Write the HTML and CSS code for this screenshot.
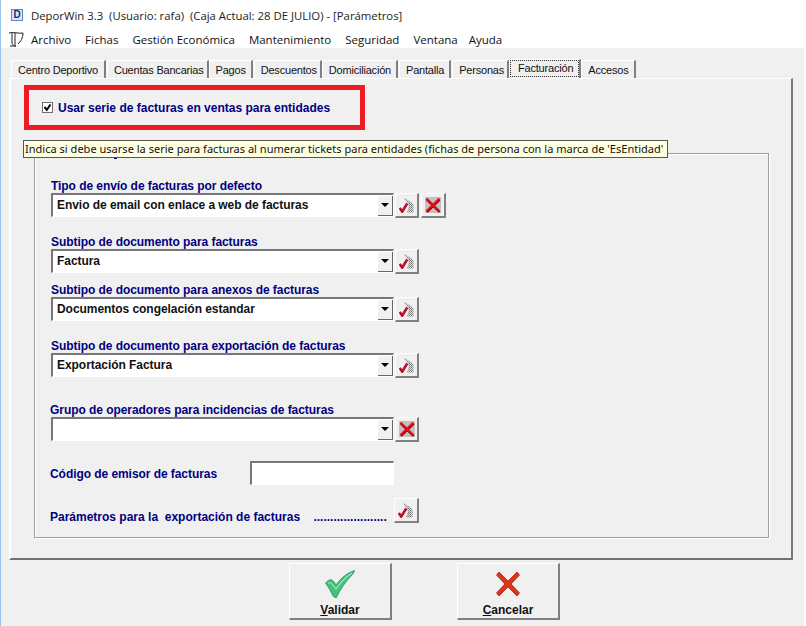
FILE: index.html
```html
<!DOCTYPE html>
<html lang="es">
<head>
<meta charset="utf-8">
<title>DeporWin</title>
<link rel="stylesheet" href="styles.css">
</head>
<body>
<svg class="defs" width="0" height="0" aria-hidden="true">
  <defs>
    <pattern id="hatch" width="2" height="2" patternUnits="userSpaceOnUse">
      <rect width="2" height="2" fill="#e0e0e0"/>
      <rect width="1" height="1" fill="#707070"/>
      <rect x="1" y="1" width="1" height="1" fill="#909090"/>
    </pattern>
    <symbol id="doc" viewBox="0 0 16 16">
      <path d="M5 .5 L14.5 7 V15.5 H8 L10 9 Z" fill="url(#hatch)"/>
      <path d="M.8 11 L3.2 14.6 L8.2 6.5" fill="none" stroke="#b8102a" stroke-width="2.6"/>
    </symbol>
    <symbol id="redx" viewBox="0 0 16 16">
      <rect width="16" height="16" fill="#c4c0c0"/>
      <path d="M2 2.6 L14.6 15 M14.6 2.6 L2 15" stroke="#700008" stroke-width="2.4"/>
      <path d="M1.4 1.6 L14.4 14.2 M14.4 1.6 L1.4 14.2" stroke="#e80c1c" stroke-width="2.2"/>
    </symbol>
  </defs>
</svg>
<div class="window">
  <header class="titlebar">
    <span class="appicon">D</span>
    <span class="titletext">DeporWin 3.3 &nbsp;(Usuario: rafa) &nbsp;(Caja Actual: 28 DE JULIO) - [Parámetros]</span>
  </header>
  <nav class="menubar">
    <svg class="menuicon" viewBox="0 0 16 16"><path d="M1 2 C5 .5 11 3 15 2 C15 7 13 10 10 13 M4 2 V12 C4 14 6 15 8 15 H2 M7 2 V14" fill="none" stroke="#222" stroke-width="1"/></svg>
    <span>Archivo</span><span>Fichas</span><span>Gestión Económica</span><span>Mantenimiento</span><span>Seguridad</span><span class="narrow">Ventana</span><span>Ayuda</span>
  </nav>
  <main class="client">
    <div class="tabs">
      <span class="tab first">Centro Deportivo</span>
      <span class="tab tight">Cuentas Bancarias</span>
      <span class="tab">Pagos</span>
      <span class="tab tight">Descuentos</span>
      <span class="tab">Domiciliación</span>
      <span class="tab">Pantalla</span>
      <span class="tab tight">Personas</span>
      <span class="tab selected"><span class="focus">Facturación</span></span>
      <span class="tab">Accesos</span>
    </div>
    <section class="page">
      <div class="redbox">
        <span class="check"><svg viewBox="0 0 9 9"><path d="M1.5 4 L3.8 6.8 L7.5 1.5" fill="none" stroke="#000" stroke-width="2"/></svg></span>
        <span class="label">Usar serie de facturas en ventas para entidades</span>
      </div>
      <div class="tooltip">Indica si debe usarse la serie para facturas al numerar tickets para entidades (fichas de persona con la marca de 'EsEntidad'</div>
      <div class="group">
        <div class="field f1">
          <div class="label">Tipo de envío de facturas por defecto</div>
          <div class="row">
            <div class="combo"><span class="value">Envio de email con enlace a web de facturas</span><span class="arrow"></span></div>
            <button class="ibtn"><svg><use href="#doc"/></svg></button>
            <button class="ibtn wide"><svg><use href="#redx"/></svg></button>
          </div>
        </div>
        <div class="field f2">
          <div class="label">Subtipo de documento para facturas</div>
          <div class="row">
            <div class="combo"><span class="value">Factura</span><span class="arrow"></span></div>
            <button class="ibtn"><svg><use href="#doc"/></svg></button>
          </div>
        </div>
        <div class="field f3">
          <div class="label">Subtipo de documento para anexos de facturas</div>
          <div class="row">
            <div class="combo"><span class="value">Documentos congelación estandar</span><span class="arrow"></span></div>
            <button class="ibtn"><svg><use href="#doc"/></svg></button>
          </div>
        </div>
        <div class="field f4">
          <div class="label">Subtipo de documento para exportación de facturas</div>
          <div class="row">
            <div class="combo"><span class="value">Exportación Factura</span><span class="arrow"></span></div>
            <button class="ibtn"><svg><use href="#doc"/></svg></button>
          </div>
        </div>
        <div class="field f5">
          <div class="label">Grupo de operadores para incidencias de facturas</div>
          <div class="row">
            <div class="combo"><span class="value"></span><span class="arrow"></span></div>
            <button class="ibtn"><svg><use href="#redx"/></svg></button>
          </div>
        </div>
        <div class="inline f6">
          <span class="label code">Código de emisor de facturas</span>
          <div class="input"></div>
        </div>
        <div class="inline f7">
          <span class="label params">Parámetros para la &nbsp;exportación de facturas &nbsp; &nbsp;......................</span>
          <button class="ibtn wide"><svg><use href="#doc"/></svg></button>
        </div>
      </div>
    </section>
    <footer class="actions">
      <button class="big">
        <svg viewBox="0 0 30 28"><path d="M0.5 13 Q3 10 6 9.5 Q9 11 11 15 C16 8 22 3 29.5 .5 C29 3 28 4 26 6 C20 12 15 20 11.5 27.5 Q9 28 8 26 Q5 19 .5 13 Z" fill="#45c07c" stroke="#2f8f5a" stroke-width=".8"/><path d="M3 13 Q6 12 8 15 L11 19 C16 12 21 7 27 3" fill="none" stroke="#9ee8bd" stroke-width="1.2"/></svg>
        <span><u>V</u>alidar</span>
      </button>
      <button class="big">
        <svg class="cancel" viewBox="0 0 24 26"><path d="M3 1 L12 10 L21 1 L23.5 4 L15 13 L23.5 22 L21 25 L12 16 L3 25 L.5 22 L9 13 L.5 4 Z" fill="#e0341a" stroke="#a82312" stroke-width=".8"/></svg>
        <span><u>C</u>ancelar</span>
      </button>
    </footer>
  </main>
</div>
</body>
</html>
```
FILE: styles.css
```css
html, body { margin: 0; padding: 0; }
body { width: 806px; height: 626px; overflow: hidden; background: #fff; font-family: "Liberation Sans", Arial, sans-serif; }
.defs { position: absolute; }
.window { width: 804px; height: 626px; display: flex; flex-direction: column; background: #fff; box-sizing: border-box; border-left: 1px solid #99c4ee; }

.titlebar { height: 30px; display: flex; align-items: center; padding-left: 10px; gap: 8px; box-sizing: border-box; }
.appicon { width: 10px; height: 10px; border: 1px solid #5b85c5; background: #dce8f8; color: #14307f; font: bold 10px/10px "Liberation Sans", sans-serif; text-align: center; }
.titletext { font: 11.35px "Open Sans", sans-serif; color: #222; white-space: pre; }

.menubar { height: 18px; display: flex; align-items: center; font: 11.5px "Open Sans", sans-serif; color: #111; padding-left: 7px; }
.menubar span { margin-right: 14px; }
.menubar span.narrow { margin-right: 11px; }
.menuicon { width: 16px; height: 16px; margin-right: 7px; }

.client { flex: 1; background: #f0f0f0; position: relative; padding-left: 8px; }
.tabs { height: 30px; box-sizing: border-box; padding: 12px 0 0 2px; display: flex; align-items: flex-end; font: 11px "Liberation Sans", sans-serif; letter-spacing: -0.2px; color: #111; }
.tab { height: 18px; padding: 0 5px 0 6px; margin-right: 1px; line-height: 19px; box-sizing: border-box; border-top: 1px solid #fff; border-left: 1px solid #fff; border-right: 2px solid #808080; white-space: nowrap; }
.tab.first { padding-right: 6px; }
.tab.tight { padding-right: 3px; margin-right: 0; }
.tab.selected { height: 19px; padding: 0; margin-right: 0; }
.focus { display: block; height: 17px; line-height: 15px; padding: 0 5px 0 7px; box-sizing: border-box; border: 1px dotted #333; }

.page { position: relative; width: 784px; height: 482px; box-sizing: border-box; border-top: 1px solid #fff; border-left: 2px solid #fff; border-right: 2px solid #777; border-bottom: 2px solid #707070; }
.label { font: bold 12px "Liberation Sans", sans-serif; color: #000080; white-space: pre; letter-spacing: -0.06px; }

.redbox { display: flex; align-items: center; gap: 5px; box-sizing: border-box; width: 341px; height: 45px; margin: 6px 0 0 13px; padding-left: 13px; border: 5px solid #ed1c24; }
.redbox .label { letter-spacing: 0; }
.check { width: 9px; height: 9px; border: 1px solid #707070; background: #fff; }
.check svg { display: block; width: 9px; height: 9px; }

.tooltip { position: absolute; left: 12px; top: 61px; height: 18px; box-sizing: border-box; width: 645px; background: #ffffe1; border: 1px solid #555; font: 11px "Noto Sans", sans-serif; letter-spacing: 0.02px; line-height: 16px; padding-left: 1px; color: #111; white-space: nowrap; z-index: 2; }

.group { position: relative; box-sizing: border-box; width: 735px; height: 385px; margin: 23px 0 0 23px; border: 1px solid #a0a0a0; padding: 0 0 0 16px; box-shadow: 1px 1px 0 #fff, inset 1px 1px 0 #fff; }
.group::before { content: ""; position: absolute; left: 79px; top: 3px; width: 3px; height: 2px; background: #000080; }
.field .label { display: block; line-height: 14px; }
.f5 .label { margin-left: -1px; }
.row { display: flex; align-items: flex-start; gap: 2px; }
.combo { width: 343px; height: 24px; margin-right: -1px; box-sizing: border-box; background: #fff; border-top: 2px solid #777; border-left: 2px solid #777; border-bottom: 1px solid #fff; border-right: 1px solid #fff; display: flex; align-items: center; justify-content: space-between; }
.value { font: bold 12px "Liberation Sans", sans-serif; letter-spacing: -0.05px; color: #111; padding: 0 0 2px 4px; white-space: pre; }
.arrow { width: 15px; height: 20px; box-sizing: border-box; background: #f0f0f0; border-right: 1px solid #666; border-bottom: 1px solid #666; display: flex; align-items: center; justify-content: center; }
.arrow::before { content: ""; border-left: 4px solid transparent; border-right: 4px solid transparent; border-top: 4px solid #000; }
.ibtn { width: 24px; height: 25px; padding: 0; box-sizing: border-box; background: #f0f0f0; border: 0; border-top: 1px solid #fff; border-left: 1px solid #fff; border-right: 2px solid #808080; border-bottom: 2px solid #808080; display: flex; align-items: center; justify-content: center; }
.ibtn svg { width: 16px; height: 16px; }
.ibtn.wide { width: 25px; }

.f1 { margin-top: 25px; }
.f2 { margin-top: 17px; }
.f3 { margin-top: 9px; }
.f4 { margin-top: 17px; }
.f5 { margin-top: 25px; }
.inline { display: flex; align-items: center; }
.f6 { margin: 19px 0 0 -1px; }
.code { width: 200px; padding-top: 2px; }
.input { width: 144px; height: 24px; box-sizing: border-box; background: #fff; border-top: 2px solid #777; border-left: 2px solid #777; border-bottom: 1px solid #fff; border-right: 1px solid #fff; }
.f7 { margin: 13px 0 0 -1px; align-items: flex-end; }
.params { width: 344px; letter-spacing: 0; margin-bottom: -1px; }

.actions { display: flex; padding-left: 280px; gap: 65px; margin-top: 3px; }
.big { width: 103px; height: 57px; padding: 6px 0 0; box-sizing: border-box; background: #f0f0f0; border: 0; border-top: 1px solid #fff; border-left: 1px solid #fff; border-right: 2px solid #808080; border-bottom: 2px solid #808080; display: flex; flex-direction: column; align-items: center; font: bold 12px "Liberation Sans", sans-serif; color: #111; }
.big svg { width: 30px; height: 28px; margin-bottom: 5px; }
.big svg.cancel { width: 24px; }
```
